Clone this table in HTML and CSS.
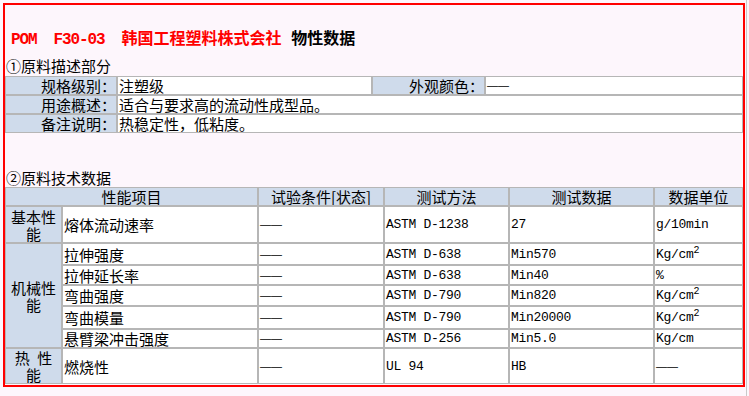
FILE: index.html
```html
<!DOCTYPE html>
<html lang="zh-CN">
<head>
<meta charset="utf-8">
<title>POM F30-03 物性数据</title>
<link rel="stylesheet" href="styles.css">
</head>
<body>
<div class="page">
  <div class="sheet">
    <h1 class="title"><span class="red"><span class="lat">POM  F30-03  </span>韩国工程塑料株式会社</span> <span class="blk">物性数据</span></h1>
    <div class="sec">①原料描述部分</div>
    <table class="grid desc">
      <colgroup><col class="d1"><col class="d2"><col class="d3"><col class="d4"></colgroup>
      <tr><th class="lab">规格级别：</th><td>注塑级</td><th class="lab">外观颜色：</th><td class="dash">——</td></tr>
      <tr><th class="lab">用途概述：</th><td colspan="3">适合与要求高的流动性成型品。</td></tr>
      <tr><th class="lab">备注说明：</th><td colspan="3">热稳定性，低粘度。</td></tr>
    </table>
    <div class="sec gap">②原料技术数据</div>
    <table class="grid tech">
      <colgroup><col class="t1"><col class="t2"><col class="t3"><col class="t4"><col class="t5"><col class="t6"></colgroup>
      <tr class="h19"><th class="hd" colspan="2">性能项目</th><th class="hd">试验条件[状态]</th><th class="hd">测试方法</th><th class="hd">测试数据</th><th class="hd">数据单位</th></tr>
      <tr class="h37"><th class="grp">基本性能</th><td>熔体流动速率</td><td class="dash">——</td><td class="lat">ASTM D-1238</td><td class="lat">27</td><td class="lat">g/10min</td></tr>
      <tr class="h22"><th class="grp" rowspan="5">机械性能</th><td>拉伸强度</td><td class="dash">——</td><td class="lat">ASTM D-638</td><td class="lat">Min570</td><td class="lat">Kg/cm<sup>2</sup></td></tr>
      <tr class="h20"><td>拉伸延长率</td><td class="dash">——</td><td class="lat">ASTM D-638</td><td class="lat">Min40</td><td class="lat">%</td></tr>
      <tr class="h21"><td>弯曲强度</td><td class="dash">——</td><td class="lat">ASTM D-790</td><td class="lat">Min820</td><td class="lat">Kg/cm<sup>2</sup></td></tr>
      <tr class="h23"><td>弯曲模量</td><td class="dash">——</td><td class="lat">ASTM D-790</td><td class="lat">Min20000</td><td class="lat">Kg/cm<sup>2</sup></td></tr>
      <tr class="h19"><td>悬臂梁冲击强度</td><td class="dash">——</td><td class="lat">ASTM D-256</td><td class="lat">Min5.0</td><td class="lat">Kg/cm</td></tr>
      <tr class="h36"><th class="grp">热 性能</th><td>燃烧性</td><td class="dash">——</td><td class="lat">UL 94</td><td class="lat">HB</td><td class="dash">——</td></tr>
    </table>
  </div>
</div>
</body>
</html>
```
FILE: styles.css
```css
html {
  background: #fdf6fc;
}
body {
  margin: 0;
  font-family: "Noto Sans CJK SC", sans-serif;
  font-size: 15px;
  color: #000;
}
.page {
  box-sizing: border-box;
  width: 747px;
  min-height: 396px;
  padding: 3px 1px 0 3px;
  border-right: 1px solid #c9c9c9;
}
.sheet {
  border: 2px solid #ff0000;
  padding: 22px 0 1px;
}
.title {
  margin: 0 0 6px;
  padding-left: 6px;
  font-size: 16px;
  font-weight: bold;
  line-height: 20px;
  white-space: nowrap;
}
.title .red {
  color: #ff0000;
}
.title .lat {
  font-family: "Liberation Mono", monospace;
  font-size: 16px;
  letter-spacing: -1.1px;
  white-space: pre;
}
.title .blk {
  margin-left: 6px;
}
.sec {
  line-height: 19px;
  padding-left: 1px;
}
.sec.gap {
  margin-top: 35px;
}
.grid {
  width: 100%;
  table-layout: fixed;
  border-collapse: separate;
  border-spacing: 0;
  background: #fff;
}
.grid th,
.grid td {
  border: 1px solid #b6b6b6;
  padding: 0 1px;
  line-height: 17px;
  font-weight: normal;
  text-align: left;
  vertical-align: middle;
  white-space: nowrap;
  overflow: hidden;
}
.grid th {
  background: #cfdbeb;
}
.desc {
  margin-top: 1px;
}
.desc tr {
  height: 19px;
}
.desc .lab {
  text-align: right;
  padding-right: 0;
}
.d1 { width: 112px; }
.d2 { width: 255px; }
.d3 { width: 113px; }
.d4 { width: 258px; }
.t1 { width: 57px; }
.t2 { width: 196px; }
.t3 { width: 126px; }
.t4 { width: 125px; }
.t5 { width: 145px; }
.t6 { width: 89px; }
.tech .hd {
  text-align: center;
}
.tech .grp {
  text-align: center;
  white-space: normal;
  padding: 0 3px;
  word-spacing: 4px;
}
.h19 { height: 19px; }
.h20 { height: 20px; }
.h21 { height: 21px; }
.h22 { height: 22px; }
.h23 { height: 23px; }
.h36 { height: 36px; }
.h37 { height: 37px; }
.lat {
  font-family: "Liberation Mono", monospace;
  font-size: 13px;
  letter-spacing: -0.3px;
}
.grid .dash {
  font-family: "Liberation Sans", sans-serif;
  font-size: 11px;
  letter-spacing: 0;
}
sup {
  font-size: 10px;
  line-height: 1;
  vertical-align: 5px;
  letter-spacing: 0;
}
```
